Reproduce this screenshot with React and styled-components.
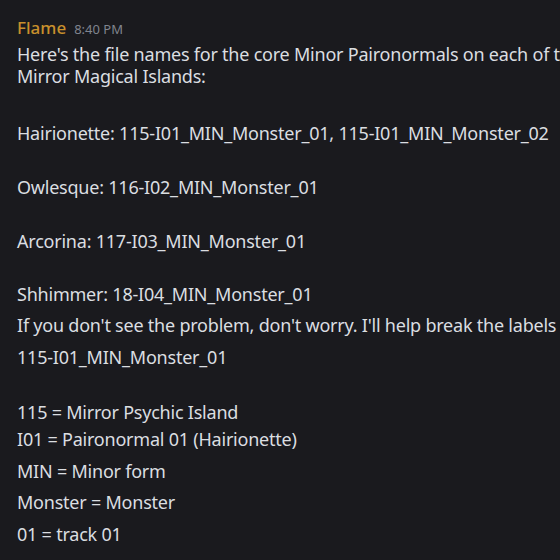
import React from "react";
import styled, { createGlobalStyle } from "styled-components";

const Global = createGlobalStyle`
    html, body {
        margin: 0;
        padding: 0;
        background: #1a1a1e;
    }
    body {
        width: 560px;
        height: 560px;
        overflow: hidden;
    }
`

// the message is cropped on the right, as in the screenshot
const lines = [
    { text: "Here's the file names for the core Minor Paironormals on each of the", gap: 0 },
    { text: "Mirror Magical Islands:", gap: 0 },
    { text: "Hairionette: 115-I01_MIN_Monster_01, 115-I01_MIN_Monster_02", gap: 35 },
    { text: "Owlesque: 116-I02_MIN_Monster_01", gap: 32 },
    { text: "Arcorina: 117-I03_MIN_Monster_01", gap: 32 },
    { text: "Shhimmer: 18-I04_MIN_Monster_01", gap: 31 },
    { text: "If you don't see the problem, don't worry. I'll help break the labels down.", gap: 9 },
    { text: "115-I01_MIN_Monster_01", gap: 10 },
    { text: "115 = Mirror Psychic Island", gap: 33 },
    { text: "I01 = Paironormal 01 (Hairionette)", gap: 5 },
    { text: "MIN = Minor form", gap: 10 },
    { text: "Monster = Monster", gap: 9 },
    { text: "01 = track 01", gap: 10 },
];

function App() {
    return (
        <>
            <Global />
            <Message>
                <Header>
                    <Name>Flame</Name>
                    <Time>8:40 PM</Time>
                </Header>
                <Body>
                    {lines.map((l, i) => (
                        <Line key={i} gap={l.gap}>{l.text}</Line>
                    ))}
                </Body>
            </Message>
        </>
    )
}
export default App;

const Message = styled.div`
    padding: 16px 0 0 17px;
    font-family: "Noto Sans", "Open Sans", sans-serif;
    color: #dbdee1;
    overflow: hidden;
`
const Header = styled.div`
    display: flex;
    align-items: baseline;
    gap: 8px;
    height: 27px;
`
const Name = styled.span`
    color: #c8902c;
    font-size: 17px;
    font-weight: 500;
`
const Time = styled.span`
    color: #80848e;
    font-size: 13px;
`
const Body = styled.div`
    display: flex;
    flex-direction: column;
`
const Line = styled.div`
    margin-top: ${p => p.gap}px;
    font-size: 18px;
    line-height: 22px;
    letter-spacing: -0.22px;
    white-space: nowrap;
`
